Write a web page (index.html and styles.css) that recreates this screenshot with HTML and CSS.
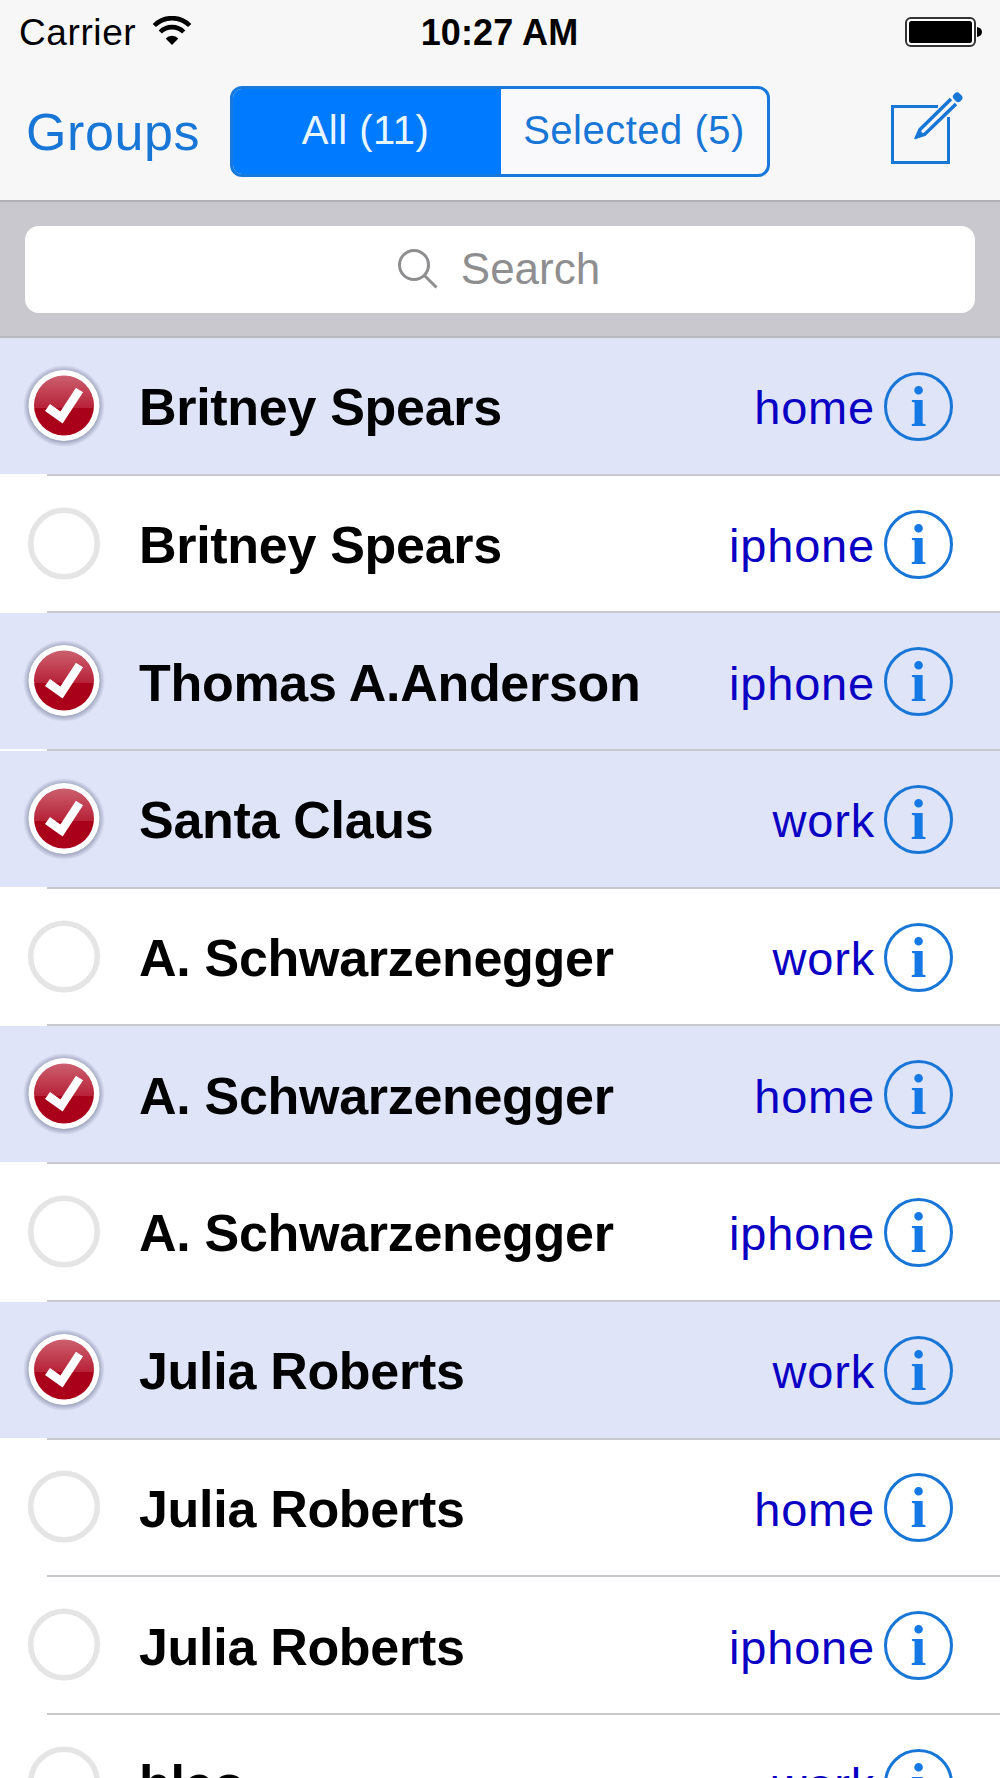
FILE: index.html
```
<!DOCTYPE html>
<html lang="en">
<head>
  <meta charset="UTF-8">
  <title>Contacts</title>
  <link rel="stylesheet" href="styles.css">
</head>
<body>
  <header>
    <div class="status">
      <div class="carrier">
        <span>Carrier</span>
        <svg width="40" height="30" viewBox="0 0 40 30">
          <g fill="none" stroke="#000" stroke-width="4.6">
            <path d="M2.3 9.5 A25 25 0 0 1 37.7 9.5"/>
            <path d="M8.3 16 A16.5 16.5 0 0 1 31.7 16"/>
          </g>
          <path d="M20 29 L13.6 22.4 A9 9 0 0 1 26.4 22.4 Z"/>
        </svg>
      </div>
      <div class="time">10:27 AM</div>
      <svg class="battery" width="78" height="30" viewBox="0 0 78 30">
        <rect x="1" y="1" width="69" height="28" rx="5" fill="#fff" stroke="#333" stroke-width="2"/>
        <rect x="4" y="4" width="63" height="22" rx="2.5"/>
        <path d="M72 10 Q77 11 77 15 T72 20 Z"/>
      </svg>
    </div>
    <nav>
      <a class="groups">Groups</a>
      <div class="segments">
        <div class="segment active">All (11)</div>
        <div class="segment">Selected (5)</div>
      </div>
      <svg class="compose" width="74" height="74" viewBox="0 0 74 74">
        <g fill="none" stroke="#1876d6" stroke-width="3">
          <path d="M48 14.5 H2.5 V70.5 H58.5 V25"/>
          <path d="M61 7 L30 37.5 L27 44.5 L34.5 42.5 L66 12" stroke-width="3.5"/>
        </g>
        <path d="M25 47.5 L29 37 L35 43.5 Z" fill="#1876d6"/>
        <rect x="63" y="1" width="9.5" height="8" rx="3.5" transform="rotate(45 67.5 5)" fill="#1876d6"/>
      </svg>
    </nav>
  </header>

  <div class="searchbar">
    <div class="field">
      <svg width="40" height="40" viewBox="0 0 40 40" fill="none" stroke="#8e8e90" stroke-width="3">
        <circle cx="16" cy="16" r="14.5"/>
        <path d="M26.5 26.5 L38.5 38.5"/>
      </svg>
      <span>Search</span>
    </div>
  </div>

  <div class="list" id="list"></div>

<svg class="defs" width="0" height="0">
  <defs>
    <linearGradient id="red" x1="0" y1="0" x2="0" y2="1">
      <stop offset="0" stop-color="#cc606e"/>
      <stop offset="0.54" stop-color="#b72238"/>
      <stop offset="0.55" stop-color="#a8021a"/>
      <stop offset="1" stop-color="#ac001a"/>
    </linearGradient>
    <radialGradient id="shadow">
      <stop offset="0.84" stop-color="#555c78" stop-opacity="0.5"/>
      <stop offset="1" stop-color="#555c78" stop-opacity="0"/>
    </radialGradient>
    <symbol id="on" viewBox="0 0 84 84">
      <circle cx="42" cy="42" r="41" fill="url(#shadow)"/>
      <circle cx="42" cy="41.5" r="35.5" fill="#fff"/>
      <circle cx="42" cy="41.5" r="30" fill="url(#red)"/>
      <path d="M25.5 43.5 L39.5 53.5 L57.5 26" fill="none" stroke="#fff" stroke-width="8.5"/>
    </symbol>
    <symbol id="off" viewBox="0 0 84 84">
      <circle cx="42" cy="41.5" r="33.3" fill="#fff" stroke="#e5e5e5" stroke-width="5.5"/>
    </symbol>
  </defs>
</svg>

<script>
const contacts = [
  ["Britney Spears", "home", true],
  ["Britney Spears", "iphone", false],
  ["Thomas A.Anderson", "iphone", true],
  ["Santa Claus", "work", true],
  ["A. Schwarzenegger", "work", false],
  ["A. Schwarzenegger", "home", true],
  ["A. Schwarzenegger", "iphone", false],
  ["Julia Roberts", "work", true],
  ["Julia Roberts", "home", false],
  ["Julia Roberts", "iphone", false],
  ["bleo", "work", false]
];

document.getElementById("list").innerHTML = contacts.map(([name, label, on]) => `
  <div class="row ${on ? "selected" : ""}">
    <svg class="check" width="84" height="84"><use href="#${on ? "on" : "off"}"/></svg>
    <span class="name">${name}</span>
    <span class="label">${label}</span>
    <span class="info">i</span>
  </div>
  <div class="line"></div>`).join("");
</script>
</body>
</html>
```

FILE: styles.css
```
* { box-sizing: border-box; }
body { margin: 0; width: 1000px; height: 1778px; overflow: hidden; background: #fff; color: #000; font-family: "Liberation Sans", Arial, sans-serif; }
svg { display: block; flex: none; }
.defs { position: absolute; }

header { height: 202px; background: #f7f7f8; border-bottom: 2px solid #b1b1b5; }
.status { display: grid; grid-template-columns: 1fr auto 1fr; align-items: center; height: 66px; padding: 0 17px 0 19px; font-size: 37px; }
.carrier { display: flex; align-items: center; gap: 16px; letter-spacing: 0.6px; }
.carrier svg { margin-top: -4px; }
.time { margin-left: -3px; font-size: 36px; font-weight: bold; letter-spacing: 0.1px; }
.battery { justify-self: end; margin-top: -2px; }

nav { display: flex; height: 134px; padding: 20px 36px 0 26px; color: #1876d6; }
.groups { width: 204px; padding-top: 17px; font-size: 52px; line-height: 58px; letter-spacing: 0.6px; }
.segments { display: flex; width: 540px; height: 91px; border: 3px solid #1879dc; border-radius: 12px; overflow: hidden; background: #f9f9fb; }
.segment { flex: 1; font-size: 40px; line-height: 83px; text-align: center; letter-spacing: 0.5px; }
.active { flex: 0 0 268px; padding-right: 3px; background: #007aff; color: #e8f6ff; }
.compose { margin: 6px 0 0 auto; }

.searchbar { height: 136px; padding: 24px 25px 0; background: #c9c8ce; border-bottom: 2px solid #b9b9c2; }
.field { display: flex; align-items: center; justify-content: center; gap: 23px; height: 87px; padding: 0 2px 2px 0; border-radius: 14px; background: #fff; color: #8e8e90; font-size: 44px; }

.row { display: flex; align-items: center; height: 135.7px; padding: 0 47px 0 22px; }
.selected { background: #dfe4f9; }
.line { height: 2px; margin-left: 47px; background: #c8c8ce; }
.name { flex: 1; margin-left: 33px; padding-top: 3px; font-size: 52px; font-weight: bold; letter-spacing: -0.3px; white-space: nowrap; }
.label { padding-top: 4px; color: #0a00c4; font-size: 47px; letter-spacing: 0.8px; }
.info { width: 69px; height: 69px; margin: 1px 0 0 9px; border: 3px solid #1876d6; border-radius: 50%; color: #1479e4; font: bold 57px/63px "Liberation Serif", "Times New Roman", serif; text-align: center; }
```
